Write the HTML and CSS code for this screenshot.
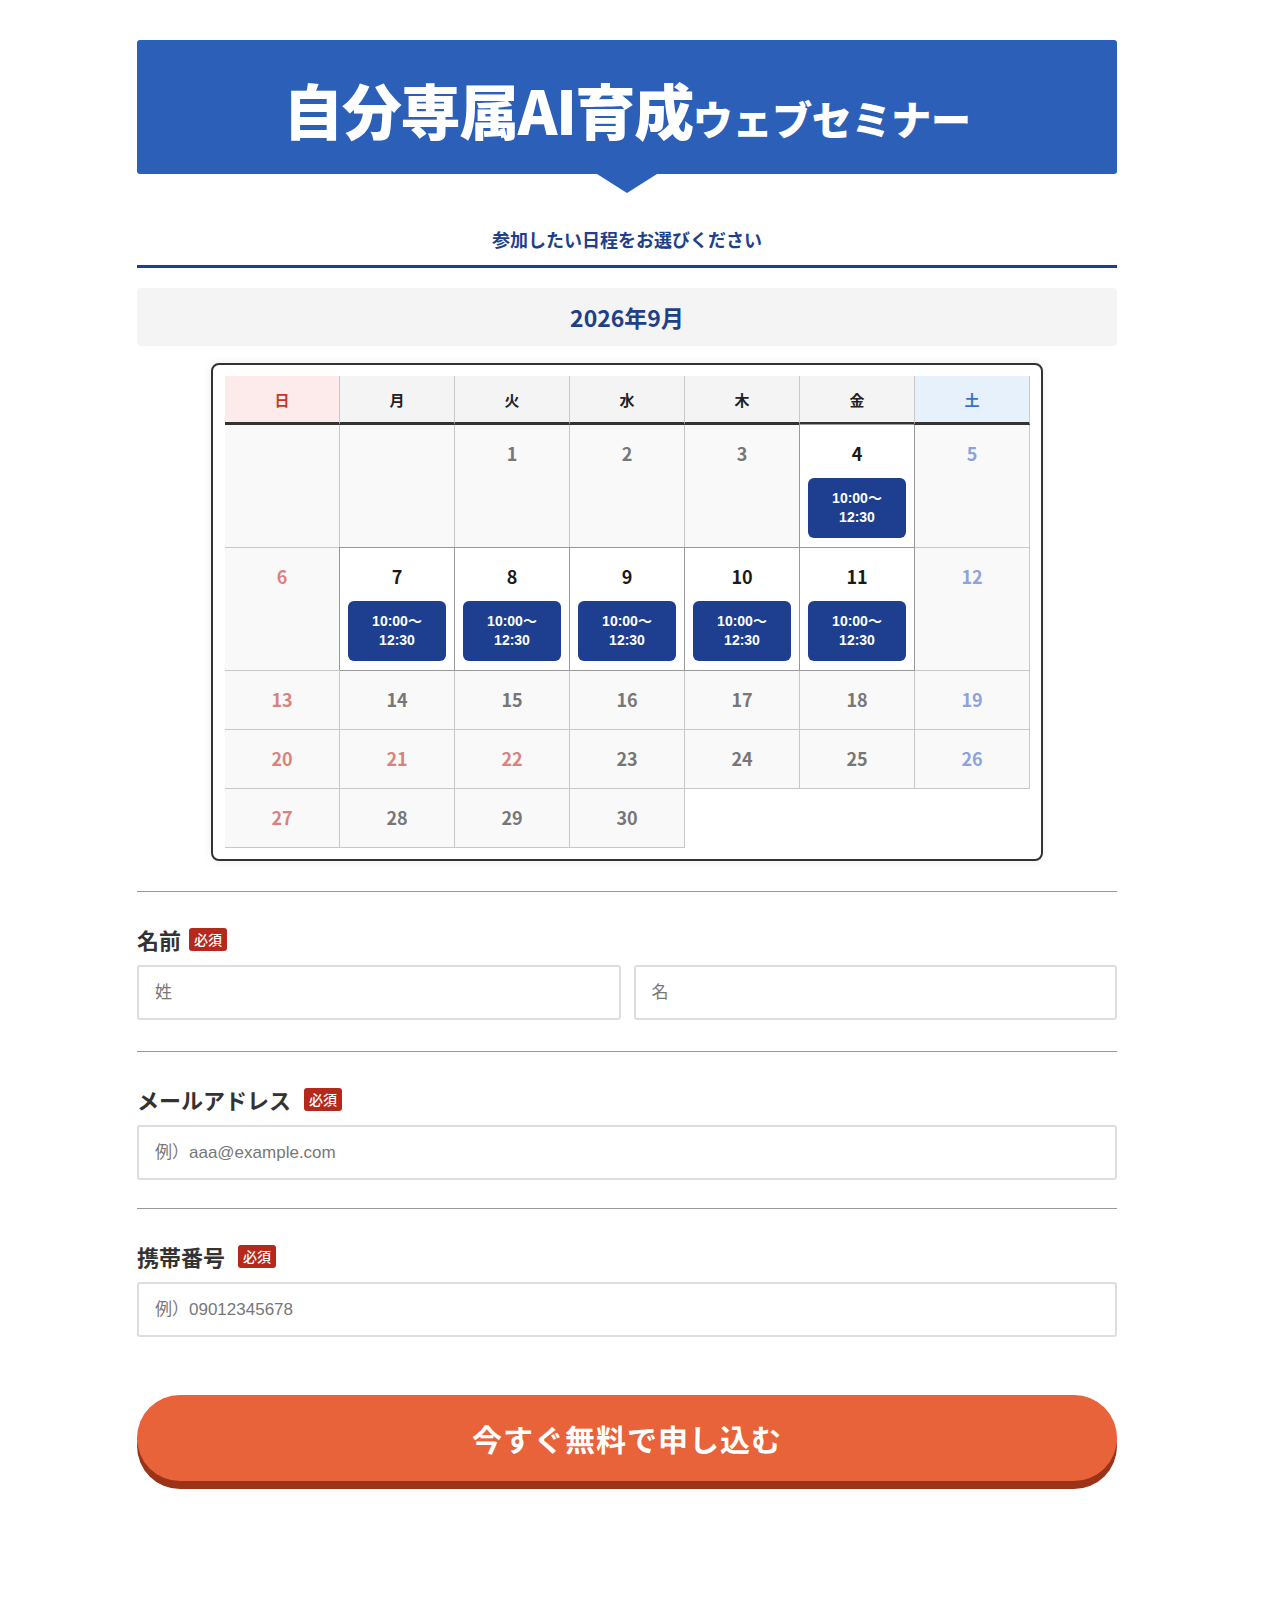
FILE: index.html
```html
<!DOCTYPE html>
<html lang="ja">
<head>
<meta charset="utf-8">
<title>自分専属AI育成ウェブセミナー</title>
<link rel="stylesheet" href="styles.css">
</head>
<body>
<div class="page">
  <header class="hero">
    <h1 class="hero-title">自分専属AI育成<span class="hero-sub">ウェブセミナー</span></h1>
  </header>

  <p class="lead">参加したい日程をお選びください</p>

  <div class="month">2026年9月</div>

  <div class="cal-card">
    <div class="cal-grid">
      <div class="dh sun">日</div>
      <div class="dh">月</div>
      <div class="dh">火</div>
      <div class="dh">水</div>
      <div class="dh">木</div>
      <div class="dh">金</div>
      <div class="dh sat">土</div>

      <div class="cell"></div>
      <div class="cell"></div>
      <div class="cell"><span class="num">1</span></div>
      <div class="cell"><span class="num">2</span></div>
      <div class="cell"><span class="num">3</span></div>
      <div class="cell avail"><span class="num">4</span><a class="slot">10:00〜<br>12:30</a></div>
      <div class="cell sat"><span class="num">5</span></div>

      <div class="cell sun"><span class="num">6</span></div>
      <div class="cell avail"><span class="num">7</span><a class="slot">10:00〜<br>12:30</a></div>
      <div class="cell avail"><span class="num">8</span><a class="slot">10:00〜<br>12:30</a></div>
      <div class="cell avail"><span class="num">9</span><a class="slot">10:00〜<br>12:30</a></div>
      <div class="cell avail"><span class="num">10</span><a class="slot">10:00〜<br>12:30</a></div>
      <div class="cell avail"><span class="num">11</span><a class="slot">10:00〜<br>12:30</a></div>
      <div class="cell sat"><span class="num">12</span></div>

      <div class="cell sun"><span class="num">13</span></div>
      <div class="cell"><span class="num">14</span></div>
      <div class="cell"><span class="num">15</span></div>
      <div class="cell"><span class="num">16</span></div>
      <div class="cell"><span class="num">17</span></div>
      <div class="cell"><span class="num">18</span></div>
      <div class="cell sat"><span class="num">19</span></div>

      <div class="cell sun"><span class="num">20</span></div>
      <div class="cell sun"><span class="num">21</span></div>
      <div class="cell sun"><span class="num">22</span></div>
      <div class="cell"><span class="num">23</span></div>
      <div class="cell"><span class="num">24</span></div>
      <div class="cell"><span class="num">25</span></div>
      <div class="cell sat"><span class="num">26</span></div>

      <div class="cell sun"><span class="num">27</span></div>
      <div class="cell"><span class="num">28</span></div>
      <div class="cell"><span class="num">29</span></div>
      <div class="cell"><span class="num">30</span></div>
      <div class="cell empty"></div>
      <div class="cell empty"></div>
      <div class="cell empty"></div>
    </div>
  </div>

  <form class="form">
    <div class="field">
      <div class="label">名前<span class="req">必須</span></div>
      <div class="row2">
        <input class="input" type="text" placeholder="姓">
        <input class="input" type="text" placeholder="名">
      </div>
    </div>
    <div class="field field-tight">
      <div class="label">メールアドレス <span class="req">必須</span></div>
      <input class="input" type="text" placeholder="例）aaa@example.com">
    </div>
    <div class="field field-last">
      <div class="label">携帯番号 <span class="req">必須</span></div>
      <input class="input" type="text" placeholder="例）09012345678">
    </div>
    <button class="submit" type="button">今すぐ無料で申し込む</button>
  </form>
</div>
</body>
</html>
```

FILE: styles.css
```css
* { box-sizing: border-box; }

body {
  margin: 0;
  padding-right: 11px;
  background: #fff;
  font-family: "Noto Sans CJK JP", "Noto Sans", sans-serif;
  color: #222;
}

.page {
  width: 980px;
  margin: 0 auto;
  padding: 40px 0 80px;
}

.hero {
  position: relative;
  background: #2b5fb8;
  border-radius: 3px;
  height: 134px;
  display: flex;
  align-items: center;
  justify-content: center;
}

.hero::after {
  content: "";
  position: absolute;
  left: 50%;
  bottom: -19px;
  margin-left: -30px;
  border-left: 30px solid transparent;
  border-right: 30px solid transparent;
  border-top: 19px solid #2b5fb8;
}

.hero-title {
  margin: 0;
  color: #fff;
  font-weight: 900;
  font-size: 60px;
  line-height: 1;
  letter-spacing: -1.4px;
  padding-top: 4px;
}

.hero-sub {
  font-size: 40px;
  letter-spacing: -0.3px;
}

.lead {
  margin: 52px 0 0;
  padding-bottom: 13px;
  text-align: center;
  font-size: 18px;
  font-weight: 700;
  line-height: 26px;
  color: #1e3f8a;
  border-bottom: 3px solid #1e3f8f;
}

.month {
  margin-top: 20px;
  height: 58px;
  background: #f4f4f4;
  border-radius: 4px;
  display: flex;
  align-items: center;
  justify-content: center;
  font-size: 23px;
  font-weight: 700;
  color: #1e3f8a;
}

.cal-card {
  width: 832px;
  margin: 17px auto 0;
  border: 2px solid #333;
  border-radius: 8px;
  padding: 11px 11px 11px 12px;
  box-shadow: 0 0 10px rgba(0, 0, 0, 0.08);
  background: #fff;
}

.cal-grid {
  display: grid;
  grid-template-columns: repeat(7, 115px);
}

.dh {
  height: 49px;
  display: flex;
  align-items: center;
  justify-content: center;
  font-size: 15px;
  font-weight: 700;
  background: #f4f4f4;
  color: #222;
  border-right: 1px solid #c8c8c8;
  border-bottom: 3px solid #333;
}
.dh.sun { background: #fdebec; color: #c0392b; }
.dh.sat { background: #e6f1fc; color: #3b6fd0; }

.cell {
  min-height: 59px;
  padding: 16px 8px 9px;
  background: #f9f9f9;
  border-right: 1px solid #c8c8c8;
  border-bottom: 1px solid #c8c8c8;
  display: flex;
  flex-direction: column;
  align-items: center;
}

.num {
  font-size: 18px;
  font-weight: 700;
  line-height: 24px;
  color: #777;
}
.cell.sun .num { color: #d9837f; }
.cell.sat .num { color: #8ca3dc; }

.cell.avail {
  background: #fff;
  border-right-color: #999;
  border-bottom-color: #999;
  box-shadow: -1px -1px 0 #999;
}
.cell.avail .num { color: #1a1a1a; }

.cell.empty {
  background: transparent;
  border: none;
}

.slot {
  display: block;
  width: 98px;
  height: 60px;
  margin-top: 13px;
  padding-top: 11px;
  border-radius: 6px;
  background: #1e3f8f;
  color: #fff;
  text-align: center;
  font-family: "Liberation Sans", "Noto Sans CJK JP", sans-serif;
  font-weight: 700;
  font-size: 14px;
  line-height: 19px;
}

.form {
  margin-top: 30px;
}

.field {
  border-top: 1px solid #999;
  padding-top: 33px;
  padding-bottom: 31px;
}
.field-tight { padding-bottom: 28px; }
.field-last { padding-bottom: 0; }

.label {
  display: flex;
  align-items: center;
  font-size: 22px;
  font-weight: 700;
  line-height: 28px;
  color: #333;
  white-space: pre;
}

.req {
  display: inline-block;
  margin-left: 8px;
  padding: 0 5px;
  height: 23px;
  line-height: 23px;
  font-size: 14px;
  font-weight: 500;
  color: #fff;
  background: #b5281c;
  border-radius: 3px;
}

.row2 {
  display: grid;
  grid-template-columns: 1fr 1fr;
  gap: 13px;
}

.input {
  display: block;
  width: 100%;
  height: 55px;
  margin-top: 12px;
  padding: 0 16px;
  border: 2px solid #ddd;
  border-radius: 3px;
  font-family: "Liberation Sans", "Noto Sans CJK JP", sans-serif;
  font-size: 17px;
  color: #333;
  background: #fff;
  outline: none;
}
.input::placeholder { color: #777; }

.submit {
  display: flex;
  align-items: center;
  justify-content: center;
  width: 100%;
  height: 86px;
  margin-top: 58px;
  border: none;
  border-radius: 43px;
  background: #e8623a;
  box-shadow: 0 8px 0 #9a3318;
  color: #fff;
  font-family: "Noto Sans CJK JP", sans-serif;
  font-size: 30px;
  font-weight: 700;
  letter-spacing: 1px;
  cursor: pointer;
}
```
